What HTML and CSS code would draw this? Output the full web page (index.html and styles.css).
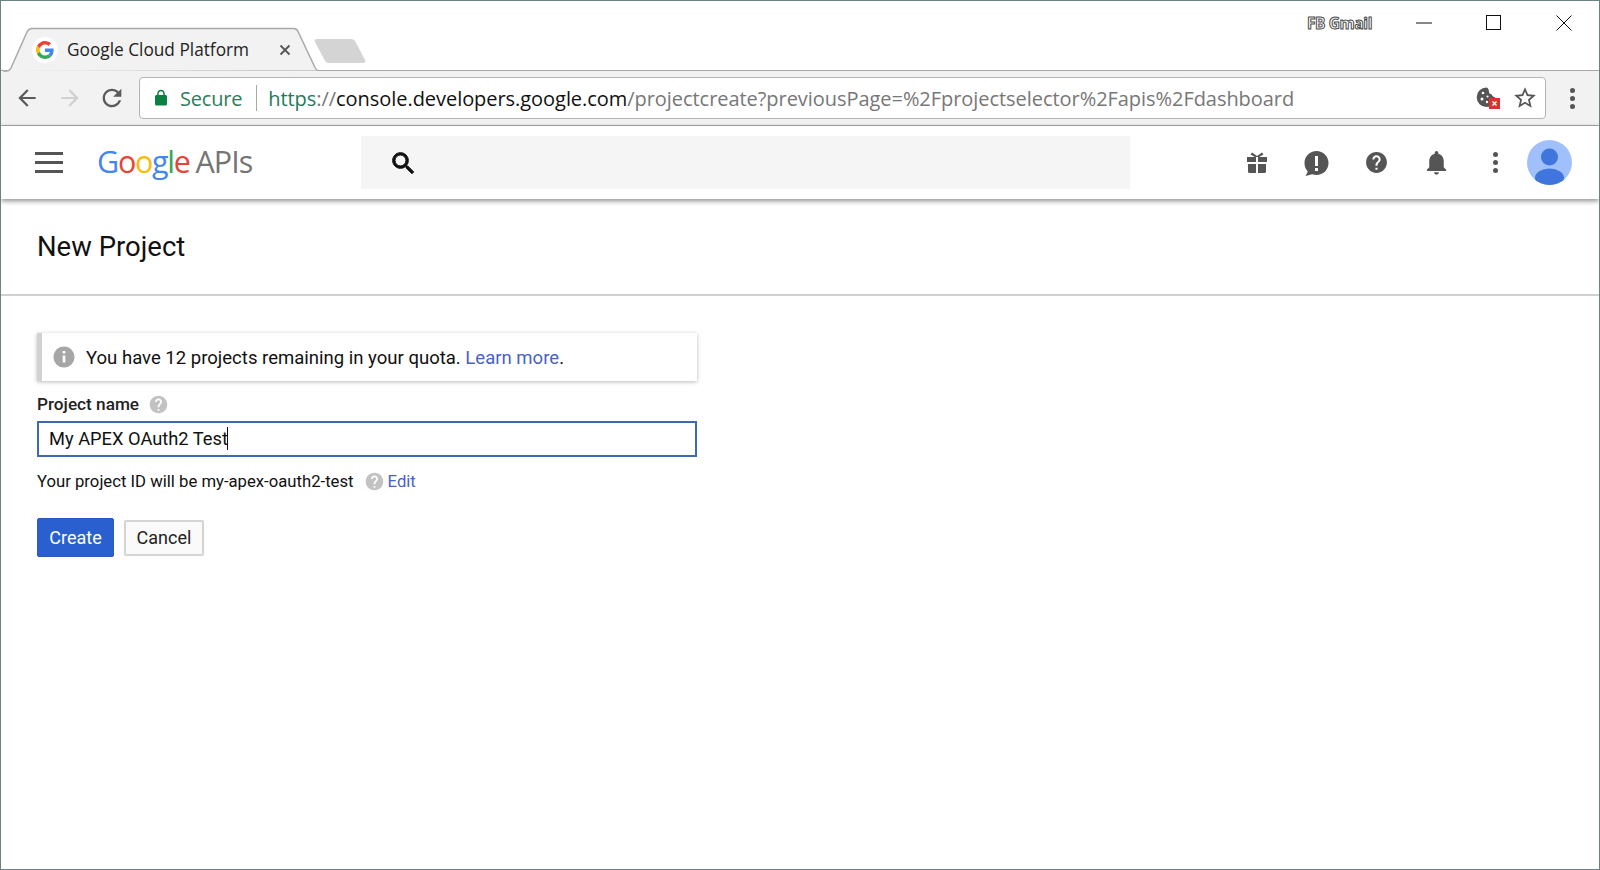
FILE: index.html
```html
<!DOCTYPE html>
<html lang="en">
<head>
<meta charset="utf-8">
<title>Google Cloud Platform</title>
<link rel="stylesheet" href="styles.css">
</head>
<body>
<div class="window">
  <div class="titlebar">
    <div class="tab">
      <svg class="tab-shape" width="316" height="45" viewBox="0 0 316 45"><path d="M1 44h4c2 0 3-1 4-3L25 5c1-2 3-3.500 5-3.500h262c2 0 3 1 4 3l17 36c1 2 2 3 3 3h0" fill="#f2f2f2" stroke="#a8a8a8" stroke-width="1.500"/></svg>
      <span class="favicon">
        <svg width="18" height="18" viewBox="0 0 48 48"><path fill="#EA4335" d="M24 9.500c3.540 0 6.710 1.220 9.210 3.600l6.850-6.850C35.900 2.380 30.470 0 24 0 14.620 0 6.510 5.380 2.560 13.220l7.980 6.190C12.430 13.720 17.740 9.500 24 9.500z"/><path fill="#4285F4" d="M46.980 24.550c0-1.570-.15-3.090-.38-4.550H24v9.020h12.940c-.58 2.960-2.260 5.480-4.780 7.180l7.730 6c4.510-4.180 7.090-10.360 7.090-17.650z"/><path fill="#FBBC05" d="M10.530 28.590c-.48-1.450-.76-2.990-.76-4.590s.27-3.140.76-4.590l-7.980-6.190C.92 16.460 0 20.120 0 24c0 3.880.92 7.540 2.560 10.780l7.970-6.190z"/><path fill="#34A853" d="M24 48c6.480 0 11.930-2.130 15.890-5.810l-7.730-6c-2.150 1.450-4.920 2.300-8.160 2.300-6.260 0-11.570-4.220-13.470-9.910l-7.980 6.190C6.510 42.620 14.620 48 24 48z"/></svg>
      </span>
      <span class="tab-title">Google Cloud Platform</span>
      <svg class="tab-close" width="12" height="12" viewBox="0 0 12 12"><path d="M1.500 1.500l9 9M10.500 1.500l-9 9" stroke="#555" stroke-width="1.800"/></svg>
    </div>
    <svg class="newtab" width="52" height="26" viewBox="0 0 52 26"><path d="M3 1h34c2 0 3 1 4 2l10 19c1 2 0 3-2 3H15c-2 0-3-1-4-2L1 4C0 2 1 1 3 1z" fill="#d4d4d4"/></svg>
    <div class="profile">FB Gmail</div>
    <div class="winctl">
      <svg width="16" height="16" viewBox="0 0 16 16"><path d="M0 8h16" stroke="#111" stroke-width="1"/></svg>
      <svg width="16" height="16" viewBox="0 0 16 16"><rect x=".5" y=".5" width="14" height="14" fill="none" stroke="#111" stroke-width="1"/></svg>
      <svg width="16" height="16" viewBox="0 0 16 16"><path d="M.5.500l15 15M15.500.500l-15 15" stroke="#111" stroke-width="1"/></svg>
    </div>
  </div>
  <div class="toolbar">
    <svg class="nav" width="26" height="26" viewBox="0 0 24 24"><path fill="#5a5a5a" d="M20 11H7.830l5.590-5.590L12 4l-8 8 8 8 1.410-1.410L7.830 13H20v-2z"/></svg>
    <svg class="nav" width="26" height="26" viewBox="0 0 24 24"><path fill="#d0d0d0" d="M12 4l-1.410 1.410L16.170 11H4v2h12.170l-5.580 5.590L12 20l8-8z"/></svg>
    <svg class="nav" width="28" height="28" viewBox="0 0 24 24"><path fill="#5a5a5a" d="M17.650 6.350C16.200 4.900 14.210 4 12 4c-4.420 0-7.990 3.580-7.990 8s3.570 8 7.990 8c3.730 0 6.840-2.550 7.730-6h-2.080c-.82 2.330-3.040 4-5.650 4-3.310 0-6-2.690-6-6s2.690-6 6-6c1.660 0 3.140.690 4.220 1.780L13 11h7V4l-2.350 2.350z"/></svg>
    <div class="omnibox">
      <svg class="lock" width="18" height="18" viewBox="0 0 24 24"><path fill="#0b8043" d="M18 8h-1V6c0-2.760-2.240-5-5-5S7 3.240 7 6v2H6c-1.100 0-2 .9-2 2v10c0 1.100.9 2 2 2h12c1.100 0 2-.9 2-2V10c0-1.100-.9-2-2-2zM9 6c0-1.660 1.340-3 3-3s3 1.340 3 3v2H9V6z"/></svg>
      <span class="secure">Secure</span>
      <span class="omni-sep"></span>
      <span class="url"><span class="url-scheme">https</span><span class="url-dim">://</span><span class="url-host">console.developers.google.com</span><span class="url-dim">/projectcreate?previousPage=%2Fprojectselector%2Fapis%2Fdashboard</span></span>
      <span class="cookie">
        <svg width="24" height="24" viewBox="0 0 24 24"><path fill="#555" d="M10.500 1.500a9.800 9.800 0 1 0 0 19.600c3 0 4-1 5-2v-4h5v-1c0-1-1-2-2-3-1.500 0-2.500-1-2.500-2.500-1.500 0-3-1-3-2.500 0-2-1-4.600-2.500-4.600z"/><circle cx="7" cy="7" r="1.300" fill="#fff"/><circle cx="6" cy="13" r="1.500" fill="#fff"/><circle cx="11.500" cy="10.500" r="1.100" fill="#fff"/><circle cx="11" cy="16" r="1.200" fill="#fff"/><rect x="13" y="12" width="11" height="11" fill="#d8332f"/><path d="M16.500 15.500l4 4M20.500 15.500l-4 4" stroke="#fff" stroke-width="1.300"/></svg>
      </span>
      <svg class="star" width="26" height="26" viewBox="0 0 24 24"><path fill="#555" d="M22 9.240l-7.190-.62L12 2 9.190 8.630 2 9.240l5.460 4.730L5.820 21 12 17.270 18.180 21l-1.630-7.030L22 9.240zM12 15.400l-3.760 2.270 1-4.280-3.320-2.880 4.380-.38L12 6.100l1.710 4.040 4.380.38-3.320 2.880 1 4.280L12 15.400z"/></svg>
    </div>
    <span class="menu-dots"><i></i><i></i><i></i></span>
  </div>
  <header class="appbar">
    <div class="hamburger"><i></i><i></i><i></i></div>
    <div class="logo"><span class="g-blue">G</span><span class="g-red">o</span><span class="g-yellow">o</span><span class="g-blue">g</span><span class="g-green">l</span><span class="g-red">e</span><span class="logo-apis">APIs</span></div>
    <div class="search">
      <svg width="29" height="29" viewBox="0 0 24 24"><path fill="#111" stroke="#111" stroke-width=".8" d="M15.500 14h-.79l-.28-.27C15.410 12.590 16 11.110 16 9.500 16 5.910 13.090 3 9.500 3S3 5.910 3 9.500 5.910 16 9.500 16c1.610 0 3.090-.59 4.230-1.570l.27.280v.79l5 4.990L20.490 19l-4.990-5zm-6 0C7.010 14 5 11.990 5 9.500S7.010 5 9.500 5 14 7.010 14 9.500 11.990 14 9.500 14z"/></svg>
    </div>
    <div class="app-icons">
      <svg class="ic-gift" width="26" height="26" viewBox="0 0 26 26"><path fill="#555" d="M3 7h9v5H3zM14 7h9v5h-9zM4 14h8v9H5.500C4.700 23 4 22.300 4 21.500zM14 14h8v7.500c0 .8-.7 1.500-1.500 1.500H14zM8 2.500l5 3.500 5-3.500 1.500 2L15 7h-4L6.500 4.500z"/></svg>
      <svg class="ic-feedback" width="28" height="28" viewBox="0 0 28 28"><path fill="#555" d="M14.500 2C21 2 26.500 7 26.500 14S21 26 14.500 26c-1.500 0-3-.3-4.300-.8L3.500 27l2.300-4.500C3.700 20.300 2.500 17.300 2.500 14 2.500 7 8 2 14.500 2z"/><path fill="#fff" d="M13 7h3v10h-3zM13 19h3v3h-3z"/></svg>
      <svg class="ic-help" width="25" height="25" viewBox="0 0 24 24"><path fill="#555" d="M12 2C6.480 2 2 6.480 2 12s4.480 10 10 10 10-4.480 10-10S17.520 2 12 2zm1 17h-2v-2h2v2zm2.070-7.750l-.9.920C13.450 12.900 13 13.500 13 15h-2v-.5c0-1.100.45-2.100 1.170-2.830l1.240-1.260c.37-.36.59-.86.59-1.410 0-1.100-.9-2-2-2s-2 .9-2 2H8c0-2.210 1.790-4 4-4s4 1.790 4 4c0 .88-.36 1.680-.93 2.250z"/></svg>
      <svg class="ic-bell" width="29" height="29" viewBox="0 0 24 24"><path fill="#555" d="M12 22c1.100 0 2-.9 2-2h-4c0 1.100.9 2 2 2zm6-6v-5c0-3.070-1.630-5.640-4.500-6.320V4c0-.83-.67-1.500-1.500-1.500s-1.500.67-1.500 1.500v.68C7.640 5.360 6 7.920 6 11v5l-2 2v1h16v-1l-2-2z"/></svg>
      <span class="menu-dots menu-dots-app"><i></i><i></i><i></i></span>
      <svg class="avatar" width="45" height="45" viewBox="0 0 45 45"><defs><clipPath id="avatar-clip"><circle cx="22.500" cy="22.500" r="22.500"/></clipPath></defs><circle cx="22.500" cy="22.500" r="22.500" fill="#a0c0fb"/><g clip-path="url(#avatar-clip)" fill="#3f75dc"><circle cx="22.500" cy="17" r="8.500"/><ellipse cx="22.500" cy="38" rx="14.500" ry="9.500"/></g></svg>
    </div>
  </header>
  <div class="page-title"><h1>New Project</h1></div>
  <main class="form">
    <div class="notice">
      <svg width="24" height="24" viewBox="0 0 24 24"><path fill="#a6a6a6" d="M12 1.500C6.200 1.500 1.500 6.200 1.500 12S6.200 22.500 12 22.500 22.500 17.800 22.500 12 17.800 1.500 12 1.500zm1.300 16h-2.600v-7h2.600v7zm0-9h-2.600V6h2.600v2.500z"/></svg>
      <span class="notice-text">You have 12 projects remaining in your quota. <a class="link">Learn more</a>.</span>
    </div>
    <div class="label-row">
      <label class="label">Project name</label>
      <svg width="21" height="21" viewBox="0 0 24 24"><path fill="#c2c2c2" d="M12 2C6.480 2 2 6.480 2 12s4.480 10 10 10 10-4.480 10-10S17.520 2 12 2zm1 17h-2v-2h2v2zm2.070-7.750l-.9.920C13.450 12.900 13 13.500 13 15h-2v-.5c0-1.100.45-2.100 1.170-2.830l1.240-1.260c.37-.36.59-.86.59-1.410 0-1.100-.9-2-2-2s-2 .9-2 2H8c0-2.210 1.790-4 4-4s4 1.790 4 4c0 .88-.36 1.680-.93 2.250z"/></svg>
    </div>
    <div class="input"><span>My APEX OAuth2 Test</span><span class="caret"></span></div>
    <div class="id-row">
      <span>Your project ID will be my-apex-oauth2-test</span>
      <svg width="21" height="21" viewBox="0 0 24 24"><path fill="#c2c2c2" d="M12 2C6.480 2 2 6.480 2 12s4.480 10 10 10 10-4.480 10-10S17.520 2 12 2zm1 17h-2v-2h2v2zm2.070-7.750l-.9.920C13.450 12.900 13 13.500 13 15h-2v-.5c0-1.100.45-2.100 1.170-2.830l1.240-1.260c.37-.36.59-.86.59-1.410 0-1.100-.9-2-2-2s-2 .9-2 2H8c0-2.210 1.790-4 4-4s4 1.790 4 4c0 .88-.36 1.680-.93 2.250z"/></svg>
      <a class="link">Edit</a>
    </div>
    <div class="actions">
      <button class="btn btn-primary">Create</button>
      <button class="btn btn-cancel">Cancel</button>
    </div>
  </main>
</div>
</body>
</html>
```
FILE: styles.css
```css
* { box-sizing: border-box; }
html, body { margin: 0; height: 100%; background: #fff; }
body { font-family: Roboto, "Liberation Sans", sans-serif; color: #111; overflow: hidden; }

.window { height: 870px; border: 1px solid #6c8282; display: flex; flex-direction: column; overflow: hidden; }

/* title bar */
.titlebar { height: 70px; flex: none; display: flex; align-items: flex-end; padding-left: 1px; border-bottom: 1px solid #a8a8a8; }
.tab { position: relative; width: 316px; height: 44px; margin-bottom: -1px; flex: none; display: flex; align-items: center; padding: 1px 0 0 30px; }
.tab-shape { position: absolute; left: 0; top: 0; }
.favicon { position: relative; width: 26px; height: 26px; border-radius: 50%; background: #fff; display: flex; align-items: center; justify-content: center; flex: none; }
.tab-title { position: relative; font-family: "Open Sans", sans-serif; font-size: 17.250px; color: #222; margin-left: 9px; white-space: nowrap; }
.tab-close { position: relative; margin-left: auto; margin-right: 27px; }
.newtab { flex: none; margin: 0 0 6px -4px; }
.profile { font-family: "Open Sans", sans-serif; font-weight: 700; font-size: 15.500px; letter-spacing: -.4px; color: #fff; -webkit-text-stroke: 1px #4a4a4a; margin-left: auto; align-self: flex-start; margin-top: 11px; }
.winctl { align-self: flex-start; display: flex; gap: 54px; margin: 14px 27px 0 44px; }

/* toolbar */
.toolbar { height: 55px; flex: none; background: #f2f2f2; border-bottom: 1px solid #a8a8a8; display: flex; align-items: center; padding: 0 0 0 13px; }
.nav { flex: none; }
.nav + .nav { margin-left: 17px; }
.nav + .nav + .nav { margin-left: 15px; }
.omnibox { width: 1407px; height: 42px; margin-left: 13px; background: #fff; border: 1px solid #b4b4b4; border-radius: 4px; display: flex; align-items: center; padding: 0 7px 0 12px; flex: none; }
.lock { flex: none; }
.secure { font-family: "Open Sans", sans-serif; font-size: 20px; letter-spacing: -.2px; color: #2e7d5c; margin-left: 10px; }
.omni-sep { width: 1px; height: 26px; background: #a8a8a8; margin: 0 11px 0 14px; flex: none; }
.url { font-family: "Open Sans", sans-serif; font-size: 20px; white-space: nowrap; letter-spacing: -.05px; }
.url-scheme { color: #1d7a5a; }
.url-dim { color: #777; }
.url-host { color: #111; }
.cookie { margin-left: auto; display: flex; flex: none; }
.star { margin-left: 12px; flex: none; }
.menu-dots { display: flex; flex-direction: column; gap: 3px; align-items: center; margin-left: 24px; flex: none; }
.menu-dots i { width: 5px; height: 5px; border-radius: 50%; background: #555; }

/* app bar */
.appbar { height: 73px; flex: none; background: #fff; display: flex; align-items: center; padding-left: 34px; box-shadow: 0 2px 5px rgba(0,0,0,.45); position: relative; }
.hamburger { width: 28px; display: flex; flex-direction: column; gap: 6px; flex: none; }
.hamburger i { height: 3px; background: #555; display: block; }
.logo { font-family: "Open Sans", sans-serif; font-size: 30.500px; font-weight: 500; letter-spacing: -1.300px; margin-left: 34px; width: 264px; flex: none; white-space: nowrap; margin-top: -3px; }
.g-blue { color: #4285f4; }
.g-red { color: #ea4335; }
.g-yellow { color: #fbbc05; }
.g-green { color: #34a853; }
.logo-apis { color: #757575; font-weight: 400; margin-left: 6px; letter-spacing: -1px; }
.search { width: 769px; height: 53px; background: #f5f5f5; display: flex; align-items: center; padding: 2px 0 0 28px; flex: none; }
.app-icons { display: flex; align-items: center; gap: 32px; margin-left: 114px; }
.ic-help { margin: 0 1px 0 2px; }
.menu-dots-app { margin-left: 10px; }
.avatar { margin-left: -3px; }

/* page */
.page-title { height: 97px; flex: none; border-bottom: 2px solid #d0d0d0; padding: 30px 0 0 36px; }
h1 { margin: 0; font-size: 27.500px; font-weight: 400; line-height: 36px; color: #111; }
.form { padding: 37px 0 0 36px; width: 696px; }
.notice { height: 48px; display: flex; align-items: center; gap: 10px; border-left: 5px solid #d2d2d2; padding-left: 10px; font-size: 18.550px; box-shadow: 0 1px 4px rgba(0,0,0,.28); background: #fff; }
.notice-text { padding-top: 2px; }
.link { color: #4a63c2; }
.label-row { display: flex; align-items: center; gap: 9px; height: 24px; margin-top: 11px; font-size: 17.200px; font-weight: 500; }
.label { color: #222; }
.input { height: 36px; margin-top: 5px; border: 2px solid #3f69b0; display: flex; align-items: center; padding: 0 0 2px 10px; font-size: 18.300px; background: #fff; }
.caret { width: 1px; height: 23px; background: #111; margin-left: -1px; }
.id-row { display: flex; align-items: center; height: 24px; margin-top: 12px; font-size: 16.700px; }
.id-row svg { margin: 0 3px 0 10px; }
.actions { display: flex; align-items: center; gap: 10px; margin-top: 25px; }
.btn { font-family: Roboto, sans-serif; font-size: 18px; border-radius: 2px; padding: 0; }
.btn-primary { width: 77px; height: 39px; background: #2a5fd0; color: #fff; border: 1px solid #2a5ac0; }
.btn-cancel { width: 80px; height: 36px; background: #fafafa; color: #222; border: 2px solid #d4d4d4; }
```
